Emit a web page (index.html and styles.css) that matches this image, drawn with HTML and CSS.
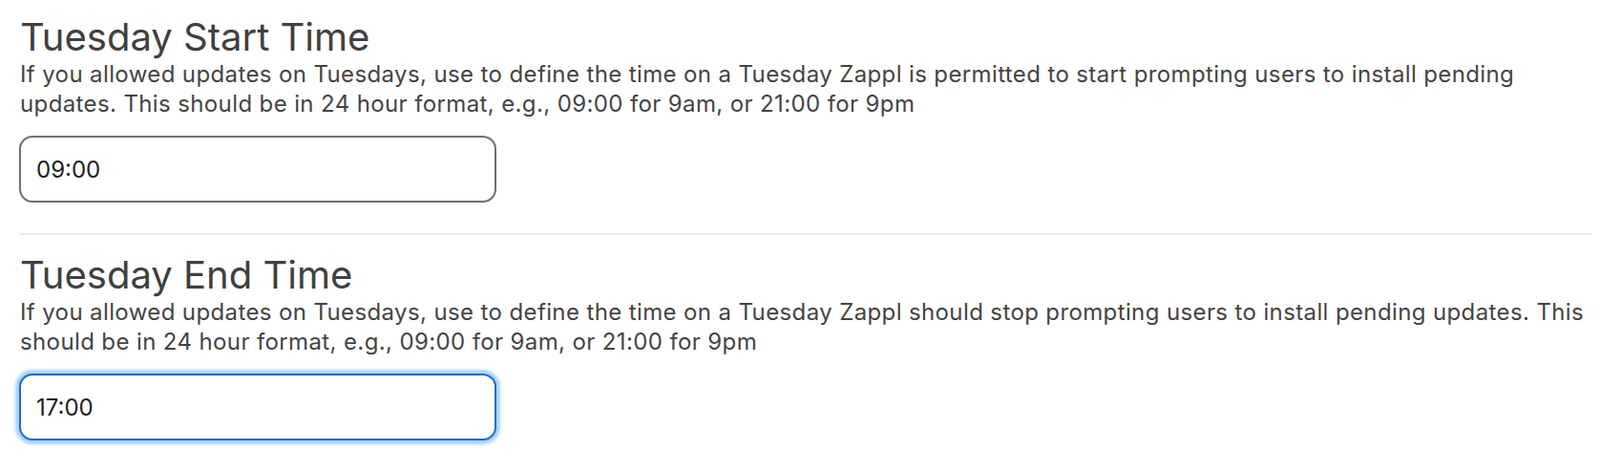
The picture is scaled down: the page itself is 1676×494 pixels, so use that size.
FILE: index.html
```html
<!DOCTYPE html>
<html lang="en">
<head>
<meta charset="utf-8">
<title>Tuesday times</title>
<link rel="stylesheet" href="styles.css">
</head>
<body>
<main class="page">
  <section class="field">
    <h2 class="field-title">Tuesday Start Time</h2>
    <p class="field-desc">If you allowed updates on Tuesdays, use to define the time on a Tuesday Zappl is permitted to start prompting users to install pending updates. This should be in 24 hour format, e.g., 09:00 for 9am, or 21:00 for 9pm</p>
    <input class="field-input" type="text" value="09:00">
  </section>
  <section class="field">
    <h2 class="field-title">Tuesday End Time</h2>
    <p class="field-desc">If you allowed updates on Tuesdays, use to define the time on a Tuesday Zappl should stop prompting users to install pending updates. This should be in 24 hour format, e.g., 09:00 for 9am, or 21:00 for 9pm</p>
    <input class="field-input is-focused" type="text" value="17:00">
  </section>
</main>
</body>
</html>
```
FILE: styles.css
```css
* { box-sizing: border-box; }
html, body { margin: 0; padding: 0; background: #ffffff; }
body {
  font-family: Inter, "Noto Sans", "Liberation Sans", sans-serif;
  color: #444444;
}
.page {
  padding: 0 9px 0 21px;
}
.field {
  padding: 15px 0 32px;
}
.field + .field {
  border-top: 2px solid #e8e8e8;
  padding-top: 18px;
}
.field-title {
  margin: 0;
  font-size: 40px;
  line-height: 47px;
  font-weight: 400;
  color: #404040;
}
.field-desc {
  margin: 0 -4px 18px 0;
  font-size: 24px;
  line-height: 31px;
  letter-spacing: 0.38px;
  font-weight: 400;
  color: #444444;
}
.field-input {
  display: block;
  width: 500px;
  height: 70px;
  margin-left: -1px;
  padding: 0 16px;
  border: 2px solid #707070;
  border-radius: 14px;
  font-family: Inter, "Noto Sans", "Liberation Sans", sans-serif;
  font-size: 24px;
  color: #1e1e1e;
  background: #ffffff;
  outline: none;
}
.field-input.is-focused {
  border-color: #1f6bc8;
  box-shadow: 0 0 3px 4px rgba(110, 180, 255, 0.6);
}
```
